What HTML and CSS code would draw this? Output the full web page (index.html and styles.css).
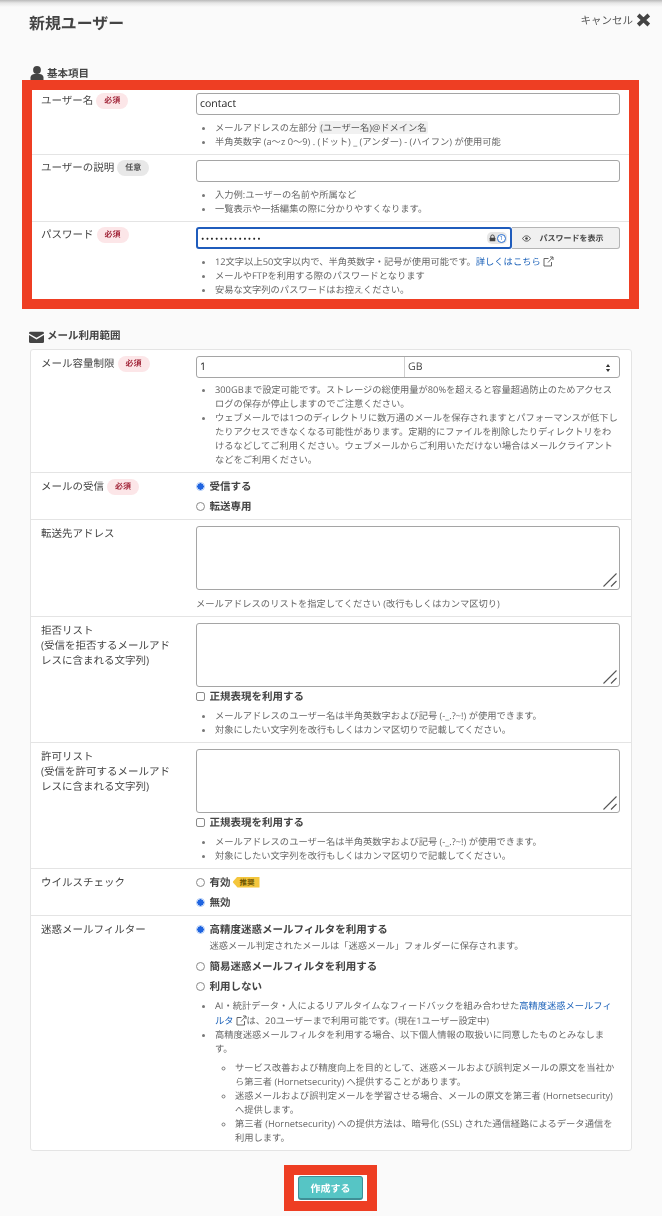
FILE: index.html
```html
<!DOCTYPE html>
<html lang="ja">
<head>
<meta charset="utf-8">
<title>新規ユーザー</title>
<link rel="stylesheet" href="styles.css">
</head>
<body>
<main class="page">
  <header class="top">
    <h1 class="title">新規ユーザー</h1>
    <a class="cancel">キャンセル
      <svg class="close" viewBox="0 0 15 14"><path d="M2.2 2l10.6 10M12.800 2L2.200 12"/></svg>
    </a>
  </header>

  <h2 class="sec sec-first">
    <svg class="sec-ico" viewBox="0 0 14 14"><circle cx="7" cy="4" r="3.900"/><path d="M0.500 14v-2.500C0.500 9.300 2.500 8 4.500 8h5c2 0 4 1.300 4 3.500V14z"/></svg>
    基本項目
  </h2>
  <section class="mark-box">
    <div class="row row-first">
      <div class="label">ユーザー名<span class="badge req">必須</span></div>
      <div class="field">
        <input class="input" type="text" value="contact">
        <ul class="hints">
          <li>メールアドレスの左部分 <code class="code">(ユーザー名)@ドメイン名</code></li>
          <li>半角英数字 (a〜z 0〜9) . (ドット) _ (アンダー) - (ハイフン) が使用可能</li>
        </ul>
      </div>
    </div>
    <div class="row">
      <div class="label">ユーザーの説明<span class="badge opt">任意</span></div>
      <div class="field">
        <input class="input" type="text">
        <ul class="hints">
          <li>入力例:ユーザーの名前や所属など</li>
          <li>一覧表示や一括編集の際に分かりやすくなります。</li>
        </ul>
      </div>
    </div>
    <div class="row row-end">
      <div class="label">パスワード<span class="badge req">必須</span></div>
      <div class="field">
        <div class="pw-group">
          <div class="pw-wrap">
            <input class="pw" type="password" value="xxxxxxxxxxxxx">
            <span class="onepw">
              <svg class="onepw-lock" viewBox="0 0 8 8"><path d="M2 4V2.500a2 2 0 0 1 4 0V4" fill="none" stroke="#444" stroke-width="1.100"/><rect x="0.800" y="3.600" width="6.400" height="4.200" rx=".6" fill="#444"/></svg>
              <span class="onepw-one">1</span>
            </span>
          </div>
          <button class="pw-show" type="button">
            <svg class="eye" viewBox="0 0 10 8"><path d="M.5 4C2 1.500 3.500 1 5 1s3 .5 4.500 3C8 6.500 6.500 7 5 7S2 6.500.5 4z" fill="none" stroke="#444" stroke-width="1"/><circle cx="5" cy="4" r="1.500" fill="#444"/></svg>
            パスワードを表示
          </button>
        </div>
        <ul class="hints hints-pw">
          <li>12文字以上50文字以内で、半角英数字・記号が使用可能です。<a class="link">詳しくはこちら<svg class="ext" viewBox="0 0 11 11"><path d="M8.500 6v4H1V2.500h4.500M5 6.500L10 1M7 1h3v3"/></svg></a></li>
          <li>メールやFTPを利用する際のパスワードとなります</li>
          <li>安易な文字列のパスワードはお控えください。</li>
        </ul>
      </div>
    </div>
  </section>

  <h2 class="sec sec-second">
    <svg class="sec-ico sec-mail" viewBox="0 0 15 14" preserveAspectRatio="none"><path d="M1.500 1h12A1.500 1.500 0 0 1 15 2.500v.4L7.500 8 0 2.900v-.4A1.500 1.500 0 0 1 1.500 1zM0 4.700L7.500 10 15 4.700v7.800a1.500 1.500 0 0 1-1.500 1.500h-12A1.500 1.500 0 0 1 0 12.500z"/></svg>
    メール利用範囲
  </h2>
  <section class="card">
    <div class="row">
      <div class="label">メール容量制限<span class="badge req">必須</span></div>
      <div class="field">
        <div class="quota">
          <input class="quota-num" type="text" value="1">
          <div class="quota-sel">
            <select class="select"><option>GB</option></select>
            <svg class="sel-arrows" viewBox="0 0 6 10"><path d="M3 0l2.600 3.600H.4zM3 10L.4 6.400h5.200z"/></svg>
          </div>
        </div>
        <ul class="hints">
          <li>300GBまで設定可能です。ストレージの総使用量が80%を超えると容量超過防止のためアクセスログの保存が停止しますのでご注意ください。</li>
          <li>ウェブメールでは1つのディレクトリに数万通のメールを保存されますとパフォーマンスが低下したりアクセスできなくなる可能性があります。定期的にファイルを削除したりディレクトリをわけるなどしてご利用ください。ウェブメールからご利用いただけない場合はメールクライアントなどをご利用ください。</li>
        </ul>
      </div>
    </div>
    <div class="row">
      <div class="label">メールの受信<span class="badge req">必須</span></div>
      <div class="field opts">
        <label class="opt-line"><input class="radio" type="radio" name="recv" checked>受信する</label>
        <label class="opt-line"><input class="radio" type="radio" name="recv">転送専用</label>
      </div>
    </div>
    <div class="row">
      <div class="label">転送先アドレス</div>
      <div class="field">
        <div class="ta-wrap">
          <textarea class="ta"></textarea>
          <svg class="grip" viewBox="0 0 14 14"><path d="M0.500 13.500L13.500 0.500M8 13.500L13.500 8"/></svg>
        </div>
        <p class="note">メールアドレスのリストを指定してください (改行もしくはカンマ区切り)</p>
      </div>
    </div>
    <div class="row">
      <div class="label">拒否リスト<br>(受信を拒否するメールアドレスに含まれる文字列)</div>
      <div class="field">
        <div class="ta-wrap">
          <textarea class="ta"></textarea>
          <svg class="grip" viewBox="0 0 14 14"><path d="M0.500 13.500L13.500 0.500M8 13.500L13.500 8"/></svg>
        </div>
        <label class="opt-line check-line"><input class="check" type="checkbox">正規表現を利用する</label>
        <ul class="hints">
          <li>メールアドレスのユーザー名は半角英数字および記号 (-_.?~!) が使用できます。</li>
          <li>対象にしたい文字列を改行もしくはカンマ区切りで記載してください。</li>
        </ul>
      </div>
    </div>
    <div class="row">
      <div class="label">許可リスト<br>(受信を許可するメールアドレスに含まれる文字列)</div>
      <div class="field">
        <div class="ta-wrap">
          <textarea class="ta"></textarea>
          <svg class="grip" viewBox="0 0 14 14"><path d="M0.500 13.500L13.500 0.500M8 13.500L13.500 8"/></svg>
        </div>
        <label class="opt-line check-line"><input class="check" type="checkbox">正規表現を利用する</label>
        <ul class="hints">
          <li>メールアドレスのユーザー名は半角英数字および記号 (-_.?~!) が使用できます。</li>
          <li>対象にしたい文字列を改行もしくはカンマ区切りで記載してください。</li>
        </ul>
      </div>
    </div>
    <div class="row">
      <div class="label">ウイルスチェック</div>
      <div class="field opts">
        <label class="opt-line"><input class="radio" type="radio" name="virus">有効<span class="rec">推奨</span></label>
        <label class="opt-line"><input class="radio" type="radio" name="virus" checked>無効</label>
      </div>
    </div>
    <div class="row row-last">
      <div class="label">迷惑メールフィルター</div>
      <div class="field opts">
        <div class="opt-block">
          <label class="opt-line"><input class="radio" type="radio" name="spam" checked>高精度迷惑メールフィルタを利用する</label>
          <p class="sub">迷惑メール判定されたメールは「迷惑メール」フォルダーに保存されます。</p>
        </div>
        <label class="opt-line"><input class="radio" type="radio" name="spam">簡易迷惑メールフィルタを利用する</label>
        <label class="opt-line"><input class="radio" type="radio" name="spam">利用しない</label>
        <ul class="hints hints-spam">
          <li class="tall">AI・統計データ・人によるリアルタイムなフィードバックを組み合わせた<a class="link">高精度迷惑メールフィ<br>ルタ<svg class="ext" viewBox="0 0 11 11"><path d="M8.500 6v4H1V2.500h4.500M5 6.500L10 1M7 1h3v3"/></svg></a>は、20ユーザーまで利用可能です。(現在1ユーザー設定中)</li>
          <li>高精度迷惑メールフィルタを利用する場合、以下個人情報の取扱いに同意したものとみなします。
            <ul class="subhints">
              <li>サービス改善および精度向上を目的として、迷惑メールおよび誤判定メールの原文を当社から第三者 (Hornetsecurity) へ提供することがあります。</li>
              <li>迷惑メールおよび誤判定メールを学習させる場合、メールの原文を第三者 (Hornetsecurity) へ提供します。</li>
              <li>第三者 (Hornetsecurity) への提供方法は、暗号化 (SSL) された通信経路によるデータ通信を利用します。</li>
            </ul>
          </li>
        </ul>
      </div>
    </div>
  </section>

  <div class="actions">
    <div class="btn-mark"><button class="submit" type="button">作成する</button></div>
  </div>
</main>
</body>
</html>
```

FILE: styles.css
```css
* { box-sizing: border-box; }
html, body { margin: 0; padding: 0; }
body {
  width: 662px;
  height: 1216px;
  overflow: hidden;
  color: #444;
  font-family: "Open Sans", "Noto Sans CJK JP", sans-serif;
  font-size: 10.5px;
  line-height: 14px;
  text-rendering: geometricPrecision;
  background: linear-gradient(#b9b9b9, #e6e6e6 3px, #fafafa 7px) no-repeat top / 100% 7px, #fafafa;
}
.page { display: flex; flex-direction: column; filter: blur(.25px); }
input, select, textarea, button { font-family: inherit; margin: 0; text-rendering: geometricPrecision; }

.top {
  height: 66px;
  padding: 11px 11px 0 29px;
  display: flex;
  justify-content: space-between;
  align-items: flex-start;
}
.title { margin: 0; padding-top: 1px; font-size: 15.900px; line-height: 22px; font-weight: 700; color: #444; }
.cancel { display: flex; align-items: center; gap: 3px; height: 18px; padding-top: 2px; color: #555; }
.close { width: 15px; height: 14px; margin-top: -2px; fill: none; stroke: #444; stroke-width: 3.800; }

.sec {
  margin: 0;
  display: flex;
  align-items: center;
  gap: 3px;
  height: 14px;
  padding: 2px 0 0 30px;
  font-size: 10.5px;
  font-weight: 700;
  color: #444;
}
.sec-ico { width: 14px; height: 14px; margin-top: -2px; fill: #444; flex: none; }
.sec-mail { width: 15px; height: 12px; margin-left: -1px; margin-top: 1px; }
.sec-second { margin-top: 19px; margin-bottom: 7px; }

.mark-box {
  margin: 0 23px 0 22px;
  border: 10px solid #ee3e23;
  background: #fff;
}
.card {
  margin: 0 30px;
  background: #fff;
  border: 1px solid #e4e4e4;
  border-radius: 3px;
}
.row {
  display: flex;
  padding: 5px 9px 6px 9px;
  border-bottom: 1px solid #e4e4e4;
}
.row-first { padding-top: 3px; }
.row-end { border-bottom: 0; padding-bottom: 3px; }
.card .row { padding: 6px 11px 6px 10px; }
.card .row-last { border-bottom: 0; }

.label { width: 155px; flex: none; padding: 1px 20px 0 0; line-height: 15px; color: #444; }
.field { width: 424px; flex: none; }

.badge {
  display: inline-block;
  height: 16px;
  line-height: 16px;
  margin: -1px 0 0 3px;
  padding: 0 8px;
  border-radius: 8px;
  font-size: 8px;
  font-weight: 700;
  vertical-align: top;
}
.req { background: #fce6e8; color: #a02236; }
.opt { background: #e8e8e8; color: #555; }

.input {
  display: block;
  width: 100%;
  height: 22px;
  padding: 0 3px;
  border: 1px solid #a5a5a5;
  border-radius: 3px;
  background: #fff;
  font-size: 10.5px;
  color: #222;
  outline: 0;
}

.hints {
  margin: 5px 0 -1px;
  padding: 1px 0 0 19px;
  font-size: 9.280px;
  line-height: 14px;
  color: #666;
}
.hints li::marker { color: #777; }
.hints-pw { margin-top: 5px; }
.quota + .hints { margin-top: 4px; }
.code {
  font-family: inherit;
  background: #f1f1f1;
  color: #555;
  border-radius: 2px;
  padding: 0 1px;
}
.link { color: #1c62b9; }
.ext { width: 11px; height: 11px; margin: -3px 0 -1px 2px; vertical-align: -1px; fill: none; stroke: #666; stroke-width: 1; }

.pw-group { display: flex; height: 22px; }
.pw-wrap { position: relative; width: 316px; height: 22px; }
.pw {
  display: block;
  width: 100%;
  height: 22px;
  padding: 0 3px;
  border: 2px solid #1f5cbc;
  border-radius: 3px;
  background: #fff;
  outline: 0;
  font-size: 9px;
  letter-spacing: 1.300px;
  color: #222;
}
.onepw {
  position: absolute;
  right: 5px;
  top: 5px;
  width: 20px;
  height: 12px;
  border-radius: 5px;
  background: #e6e6e6;
  display: flex;
  align-items: center;
  gap: 1px;
  padding-left: 2px;
}
.onepw-lock { width: 7px; height: 8px; }
.onepw-one {
  width: 9px;
  height: 9px;
  border: 1px solid #2a6fd0;
  border-radius: 50%;
  background: #fff;
  color: #2a6fd0;
  font-size: 6px;
  line-height: 7px;
  text-align: center;
}
.pw-show {
  width: 108px;
  height: 22px;
  margin-left: 0;
  padding: 0 0 0 10px;
  border: 1px solid #b5b5b5;
  border-left: 0;
  border-radius: 0 3px 3px 0;
  background: #f0f0f0;
  color: #444;
  font-size: 8px;
  font-weight: 700;
  display: flex;
  align-items: center;
  gap: 8.500px;
}
.eye { width: 9px; height: 7px; }

.quota {
  display: flex;
  height: 22px;
  border: 1px solid #a5a5a5;
  border-radius: 3px;
  background: #fff;
}
.quota-num {
  width: 208px;
  border: 0;
  border-right: 1px solid #cfcfcf;
  padding: 0 3px;
  font-size: 10.5px;
  color: #222;
  background: transparent;
  outline: 0;
}
.quota-sel { position: relative; flex: 1; }
.select {
  width: 100%;
  height: 100%;
  appearance: none;
  border: 0;
  padding: 0 3px;
  background: transparent;
  font-size: 10.5px;
  color: #444;
  outline: 0;
}
.sel-arrows { position: absolute; right: 8px; top: 6.500px; width: 6px; height: 8px; fill: #333; }

.opts { display: flex; flex-direction: column; gap: 6px; }
.opt-line {
  display: flex;
  align-items: flex-start;
  height: 14px;
  line-height: 16px;
  font-weight: 700;
  color: #444;
}
.radio {
  appearance: none;
  align-self: center;
  width: 9px;
  height: 9px;
  margin: 0 4.500px 0 0;
  border: 1px solid #8a8a8a;
  border-radius: 50%;
  background: #fff;
  flex: none;
}
.radio:checked {
  border-color: #a9c6f5;
  background: radial-gradient(circle, #1f64e0 0 3px, #fff 3.500px);
}
.check {
  appearance: none;
  align-self: center;
  width: 9px;
  height: 9px;
  margin: 0 4.500px 0 0;
  border: 1px solid #8a8a8a;
  border-radius: 2px;
  background: #fff;
  flex: none;
}
.check-line { margin-top: 2px; }

.ta-wrap { position: relative; height: 64px; }
.ta {
  display: block;
  width: 100%;
  height: 100%;
  border: 1px solid #a5a5a5;
  border-radius: 3px;
  background: #fff;
  resize: none;
  outline: 0;
}
.grip { position: absolute; right: 3px; bottom: 3px; width: 14px; height: 14px; fill: none; stroke: #555; stroke-width: 1.100; }
.note { margin: 6px 0 -1px; padding-top: 1px; font-size: 9.280px; line-height: 14px; color: #666; }

.rec {
  align-self: center;
  margin-left: 2px;
  width: 27px;
  height: 11px;
  background: #f4c63d;
  color: #6b5200;
  font-size: 7.500px;
  font-weight: 700;
  line-height: 12px;
  padding-left: 7px;
  clip-path: polygon(0 50%, 5px 0, 100% 0, 100% 100%, 5px 100%);
}
.opt-block { margin-bottom: 1px; }
.opt-block .sub { margin: 2px 0 -1px; padding: 1px 0 0 13.500px; font-size: 9.280px; line-height: 14px; color: #666; }
.hints-spam { margin-top: -1px; }
.tall { line-height: 14.500px; }
.subhints { margin: 5px 0 0; padding: 0 0 0 20px; list-style: circle; line-height: 14px; }

.actions { display: flex; justify-content: center; margin-top: 14px; padding-right: 1px; }
.btn-mark {
  border: 10px solid #ee3e23;
  background: #fff;
  padding: 1px 4px;
}
.submit {
  display: block;
  width: 65px;
  height: 24px;
  border: 1px solid #3f8f96;
  border-bottom-width: 2px;
  border-radius: 3px;
  background: #56c5c5;
  color: #fff;
  font-size: 10px;
  font-weight: 700;
  padding: 0;
}
```
